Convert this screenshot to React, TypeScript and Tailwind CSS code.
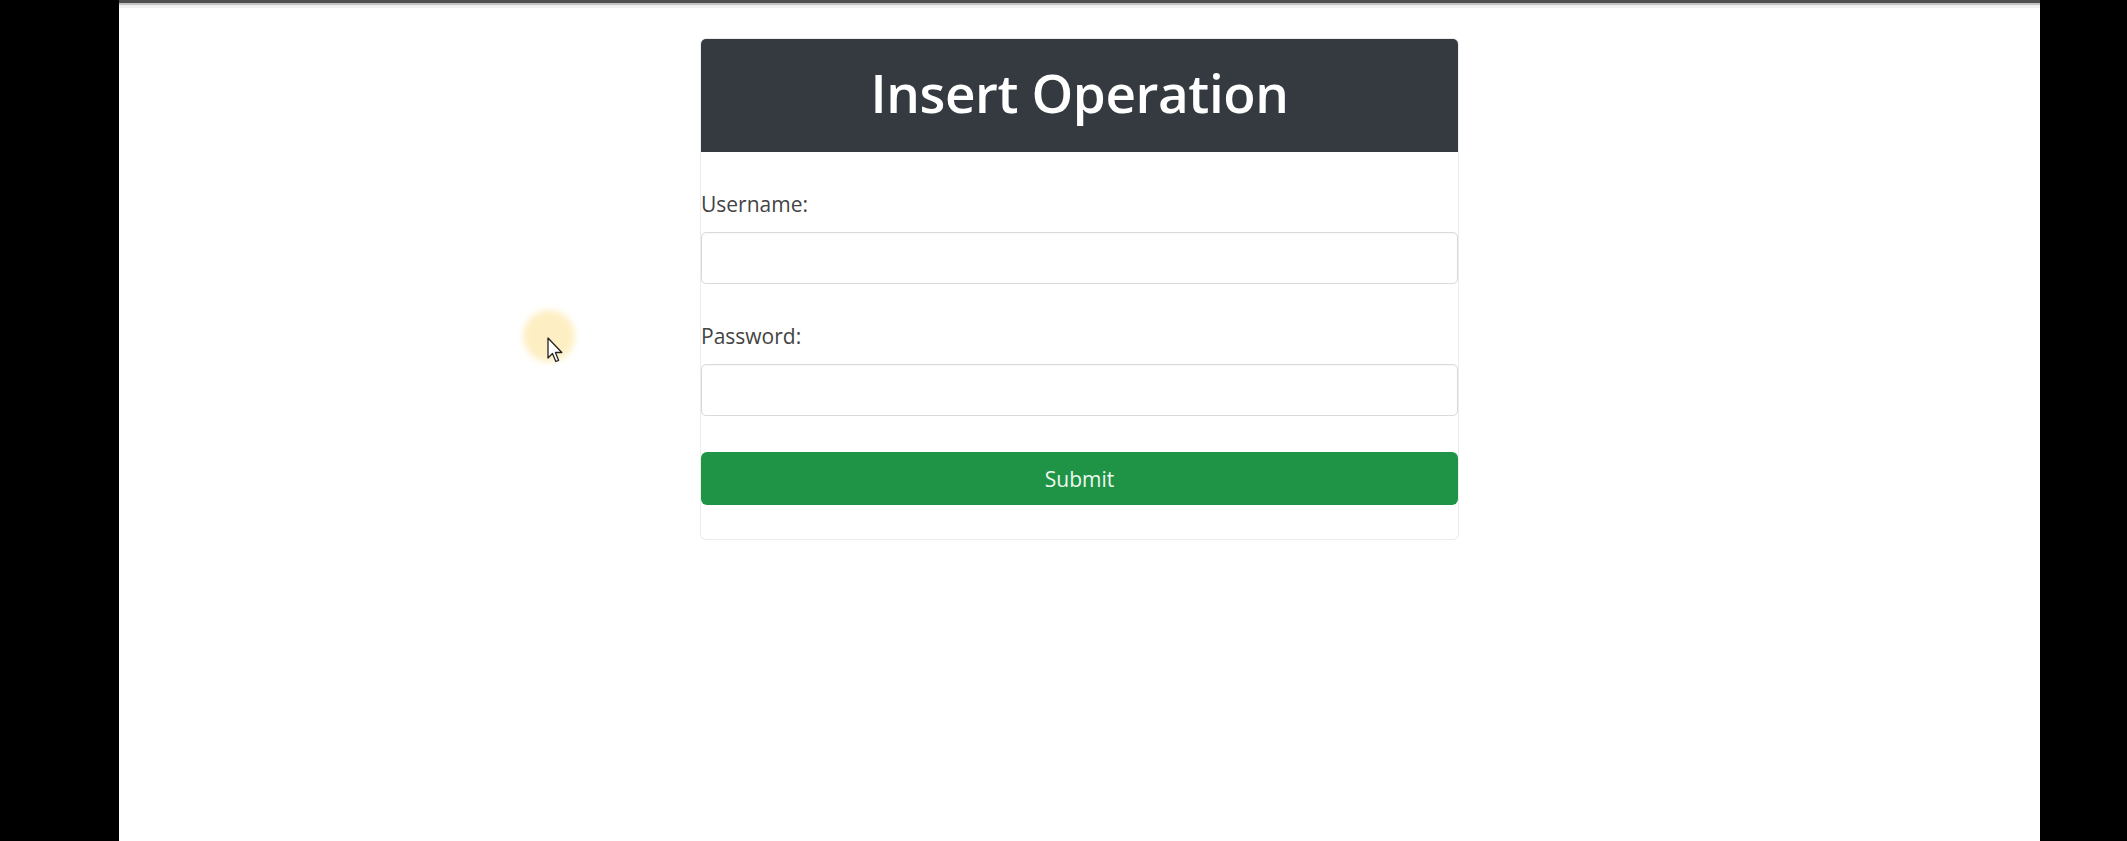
import React from "react";

export default function App() {
  return (
    <div className="relative flex h-[841px] w-[2127px] overflow-hidden bg-black" style={{ fontFamily: '"Open Sans", "Noto Sans", sans-serif' }}>
      <div className="w-[119px] shrink-0 bg-black" />
      <div className="flex w-[1921px] shrink-0 flex-col items-center bg-white">
        <div className="h-[3px] w-full shrink-0 bg-[#505050]" />
        <div className="h-[2px] w-full shrink-0 bg-[#c4c4c4]" />
        <div className="h-[3px] w-full shrink-0 bg-[#f1f1f1]" />
        <div className="mt-[31px] w-[757px] rounded-[5px] bg-white shadow-[0_0_0_1px_#ececec]">
          <div className="flex h-[113px] items-center justify-center rounded-t-[5px] bg-[#343a40]">
            <h1 className="pb-[7px] text-[53px] font-semibold leading-none tracking-[-0.4px] text-white">Insert Operation</h1>
          </div>
          <form className="flex flex-col pt-[36px] pb-[34px]" onSubmit={(e) => e.preventDefault()}>
            <label className="h-[32px] text-[21px] leading-[32px] text-[#444]">Username:</label>
            <input
              type="text"
              className="mt-[12px] h-[52px] w-full rounded-[5px] border border-[#dadada] bg-white px-3 shadow-[inset_0_1px_2px_rgba(0,0,0,0.04)] outline-none"
            />
            <label className="mt-[36px] h-[32px] text-[21px] leading-[32px] text-[#444]">Password:</label>
            <input
              type="password"
              className="mt-[12px] h-[52px] w-full rounded-[5px] border border-[#dadada] bg-white px-3 shadow-[inset_0_1px_2px_rgba(0,0,0,0.04)] outline-none"
            />
            <button
              type="submit"
              className="mt-[36px] h-[53px] w-full rounded-[6px] bg-[#1f9446] pt-[2px] text-[21px] text-[#eef8ee]"
            >
              Submit
            </button>
          </form>
        </div>
      </div>
      <div className="w-[87px] shrink-0 bg-black" />

      {/* cursor highlight */}
      <div className="pointer-events-none absolute left-[523px] top-[310px] h-[52px] w-[52px] rounded-full bg-[#fdeab0] opacity-75 blur-[3px]" />
      <svg className="pointer-events-none absolute left-[547px] top-[337px]" width="18" height="28" viewBox="0 0 18 28">
        <path d="M1 1 L1 21 L5.5 16.5 L8.8 24.5 L11.6 23.3 L8.4 15.5 L14.8 15.5 Z" fill="#ffffff" stroke="#222" strokeWidth="1.3" strokeLinejoin="round" />
      </svg>
    </div>
  );
}
